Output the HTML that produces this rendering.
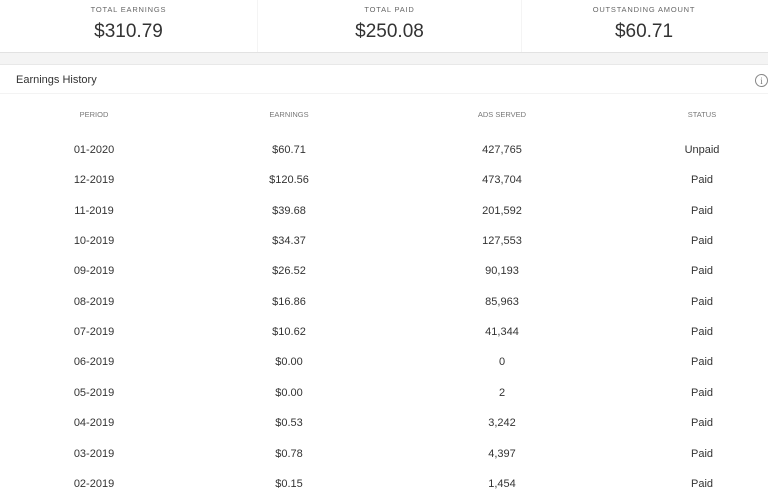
<!DOCTYPE html>
<html><head><style>
body{margin:0;width:768px;height:499px;overflow:hidden;background:#fff;font-family:"Liberation Sans",sans-serif;color:#333;position:relative}
.card{position:absolute;top:0;height:52px;text-align:center}
.lab{position:absolute;top:5px;left:0;right:0;font-size:7.5px;letter-spacing:.8px;color:#666}
.val{position:absolute;top:21px;left:0;right:0;font-size:19px;color:#333}
.band{position:absolute;top:52px;left:0;width:768px;height:11px;background:#f4f4f4;border-top:1px solid #e2e2e2;border-bottom:1px solid #e8e8e8}
.title{position:absolute;top:74px;left:16px;font-size:11px;color:#333}
.sep{position:absolute;top:93px;left:0;width:768px;border-top:1px solid #f3f3f3}
.info{position:absolute;top:74px;left:755px;width:13px;height:13px;border:1px solid #888;border-radius:50%;box-sizing:border-box;font-size:9px;text-align:center;line-height:12px;color:#777;font-family:"Liberation Serif",serif}
.c{position:absolute;width:200px;margin-left:-100px;text-align:center;font-size:11px;color:#333}
.h{font-size:7.5px;color:#777}
</style></head><body>
<div class="card" style="left:0;width:257px"><div class="lab">TOTAL EARNINGS</div><div class="val">$310.79</div></div>
<div class="card" style="left:257px;width:263px;border-left:1px solid #f4f4f4;border-right:1px solid #f4f4f4"><div class="lab">TOTAL PAID</div><div class="val">$250.08</div></div>
<div class="card" style="left:520px;width:248px"><div class="lab">OUTSTANDING AMOUNT</div><div class="val">$60.71</div></div>
<div class="band"></div>
<div class="title">Earnings History</div>
<div class="info">i</div>
<div class="sep"></div>
<div id="t"></div>
<script>
var rows=[["PERIOD","EARNINGS","ADS SERVED","STATUS"],
["01-2020","$60.71","427,765","Unpaid"],["12-2019","$120.56","473,704","Paid"],["11-2019","$39.68","201,592","Paid"],["10-2019","$34.37","127,553","Paid"],["09-2019","$26.52","90,193","Paid"],["08-2019","$16.86","85,963","Paid"],["07-2019","$10.62","41,344","Paid"],["06-2019","$0.00","0","Paid"],["05-2019","$0.00","2","Paid"],["04-2019","$0.53","3,242","Paid"],["03-2019","$0.78","4,397","Paid"],["02-2019","$0.15","1,454","Paid"]];
var xs=[94,289,502,702],h="";
rows.forEach(function(r,i){var y=i==0?110:144+(i-1)*30.35;r.forEach(function(v,j){h+='<div class="c'+(i==0?' h':'')+'" style="left:'+xs[j]+'px;top:'+y+'px">'+v+'</div>';});});
document.getElementById("t").innerHTML=h;
</script>
</body></html>
